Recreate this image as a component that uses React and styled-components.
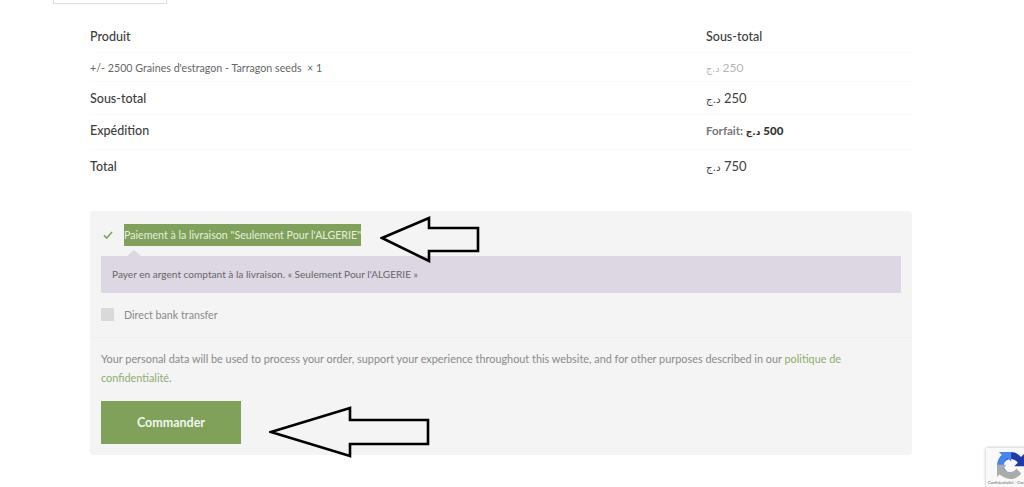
import React from 'react'
import styled, { createGlobalStyle } from 'styled-components'

const rows = [
  { label: 'Sous-total', amount: '250', height: 33, lift: 0 },
  { label: 'Expédition', amount: '500', height: 35, lift: 4, flat: true },
  { label: 'Total', amount: '750', height: 34, lift: 2, last: true }
]

function Price (props) {
  return (
    <Amount tone={props.tone}>
      <Currency>د.ج</Currency> {props.value}
    </Amount>
  )
}

function Arrow (props) {
  return (
    <ArrowSvg width={props.width} height={props.height} left={props.left} top={props.top} viewBox={`0 0 ${props.width} ${props.height}`}>
      <polygon points={props.points} fill='none' stroke='#000' strokeWidth='2.6' strokeLinejoin='miter' />
    </ArrowSvg>
  )
}

function App () {
  return (
    <Page>
      <GlobalStyle />
      <Stub />
      <Summary>
        <Row height={33}>
          <Heading>Produit</Heading>
          <Heading>Sous-total</Heading>
        </Row>
        <Row height={29}>
          <ProductName>+/- 2500 Graines d'estragon - Tarragon seeds &nbsp;× 1</ProductName>
          <Price value='250' tone='light' />
        </Row>
        {rows.map(row => (
          <Row key={row.label} height={row.height} lift={row.lift} last={row.last}>
            <Heading>{row.label}</Heading>
            {row.flat
              ? <Flat><FlatLabel>Forfait:</FlatLabel> <Currency>د.ج</Currency> 500</Flat>
              : <Price value={row.amount} />}
          </Row>
        ))}
      </Summary>
      <Payment>
        <Method>
          <CheckMark width='10' height='10' viewBox='0 0 10 10'>
            <path d='M1 5.5 L3.8 8 L9 2' fill='none' stroke='#8aa86a' strokeWidth='1.8' />
          </CheckMark>
          <Selected>Paiement à la livraison "Seulement Pour l'ALGERIE"</Selected>
        </Method>
        <Notice>Payer en argent comptant à la livraison. « Seulement Pour l'ALGERIE »</Notice>
        <Bank>
          <Square />
          <BankLabel>Direct bank transfer</BankLabel>
        </Bank>
        <Terms>
          Your personal data will be used to process your order, support your experience throughout this website, and for other purposes described in our <TermsLink>politique de confidentialité</TermsLink>.
        </Terms>
        <OrderButton>Commander</OrderButton>
      </Payment>
      <Arrow left={380} top={216} width={101} height={47} points='2,22 49,2 49,12 98,12 98,35 49,35 49,45' />
      <Arrow left={269} top={406} width={162} height={52} points='2,26 81,2 81,14 159,14 159,38 81,38 81,50' />
      <Recaptcha>
        <svg width='27' height='27' viewBox='0 0 64 64'>
          <path d='M64 31.955l-.033-1.37V4.687l-7.16 7.16C50.948 4.674 42.033.093 32.05.093c-10.4 0-19.622 4.96-25.458 12.64l11.736 11.86a15.55 15.55 0 0 1 4.754-5.334c2.05-1.6 4.952-2.906 9.968-2.906.606 0 1.074.07 1.417.2 6.216.49 11.604 3.92 14.774 8.9l-8.308 8.308c10.523-.04 22.4-.066 24.055 0' fill='#1c3aa9' />
          <path d='M31.862.094l-1.37.033H4.594l7.16 7.16C4.58 13.147 0 22.06 0 32.046c0 10.4 4.96 19.622 12.64 25.458L24.5 45.768a15.55 15.55 0 0 1-5.334-4.754c-1.6-2.05-2.906-4.952-2.906-9.968 0-.606.07-1.074.2-1.417.49-6.216 3.92-11.604 8.9-14.774l8.308 8.308c-.04-10.523-.066-22.4 0-24.055' fill='#4285f4' />
          <path d='M.001 31.955l.033 1.37v25.9l7.16-7.16c5.86 7.173 14.774 11.754 24.76 11.754 10.394 0 19.62-4.96 25.456-12.64l-11.736-11.86a15.55 15.55 0 0 1-4.754 5.334c-2.05 1.6-4.952 2.906-9.968 2.906-.606 0-1.074-.07-1.417-.2-6.216-.49-11.604-3.92-14.774-8.9l8.308-8.308c-10.523.04-22.4.066-24.055 0' fill='#ababab' />
        </svg>
        <RecaptchaText>Confidentialité - Conditions</RecaptchaText>
      </Recaptcha>
    </Page>
  )
}

const GlobalStyle = createGlobalStyle`
  html, body {
    margin: 0;
    height: 100%;
    overflow: hidden;
    background: #fff;
  }
  body {
    font-family: 'Lato', 'Noto Sans', sans-serif;
  }
`

const Page = styled.div`
  position: relative;
  width: 1024px;
  height: 487px;
  overflow: hidden;
  padding: 0 112px 0 90px;
  box-sizing: border-box;
`

const Stub = styled.div`
  width: 114px;
  height: 5px;
  margin: -1px 0 0 -37px;
  border: 1px solid #dcdcdc;
  box-sizing: border-box;
`

const Summary = styled.div`
  margin-top: 16px;
  display: flex;
  flex-direction: column;
`

const Row = styled.div`
  display: grid;
  grid-template-columns: 616px 1fr;
  align-items: center;
  height: ${props => props.height}px;
  padding-bottom: ${props => props.lift || 0}px;
  box-sizing: border-box;
  border-bottom: ${props => props.last ? 'none' : '1px solid #fafafa'};
`

const Heading = styled.div`
  font-size: 12.5px;
  font-weight: 500;
  color: #3d3d3d;
`

const ProductName = styled.div`
  font-size: 10.7px;
  color: #666;
`

const Amount = styled.div`
  color: ${props => props.tone === 'light' ? '#b5b5b5' : '#3d3d3d'};
  font-size: ${props => props.tone === 'light' ? '12px' : '13px'};
`

const Currency = styled.span`
  unicode-bidi: isolate;
  direction: rtl;
  font-family: 'DejaVu Sans', sans-serif;
  font-size: 0.8em;
`

const Flat = styled.div`
  font-size: 11.5px;
  font-weight: 900;
  color: #333;
`

const FlatLabel = styled.span`
  color: #777;
  font-weight: 700;
`

const Payment = styled.div`
  margin-top: 27px;
  height: 244px;
  background: #f4f4f4;
  border-radius: 4px;
  padding: 13px 11px 0;
  box-sizing: border-box;
`

const Method = styled.div`
  display: flex;
  align-items: center;
  height: 22px;
  padding-left: 2px;
  gap: 11px;
`

const CheckMark = styled.svg`
  flex: none;
`

const Selected = styled.span`
  background: #7fa15a;
  color: #e6eedd;
  font-size: 10.65px;
  line-height: 22px;
  white-space: nowrap;
`

const Notice = styled.div`
  position: relative;
  margin-top: 10px;
  height: 37px;
  padding-left: 11px;
  background: #ddd6e3;
  color: #666;
  font-size: 10.1px;
  line-height: 37px;
  &::before {
    content: '';
    position: absolute;
    left: 26px;
    top: -6px;
    border-left: 7px solid transparent;
    border-right: 7px solid transparent;
    border-bottom: 6px solid #ddd6e3;
  }
`

const Bank = styled.div`
  display: flex;
  align-items: center;
  gap: 10px;
  height: 45px;
  margin: 0 -11px;
  padding: 0 11px 1px;
  box-sizing: border-box;
  border-bottom: 1px solid #efefef;
`

const Square = styled.span`
  width: 13px;
  height: 13px;
  background: #d9d9d9;
`

const BankLabel = styled.span`
  font-size: 10.7px;
  color: #8a8a8a;
`

const Terms = styled.p`
  margin: 11px 0 0;
  font-size: 10.87px;
  line-height: 19px;
  color: #8a8a8a;
`

const TermsLink = styled.a`
  color: #8fac70;
`

const OrderButton = styled.button`
  display: block;
  width: 140px;
  height: 43px;
  margin-top: 14px;
  border: none;
  background: #7fa15a;
  color: #f3f6ef;
  font-family: inherit;
  font-size: 12.5px;
  font-weight: 700;
`

const ArrowSvg = styled.svg`
  position: absolute;
  left: ${props => props.left}px;
  top: ${props => props.top}px;
`

const Recaptcha = styled.div`
  position: absolute;
  left: 986px;
  top: 448px;
  width: 60px;
  height: 39px;
  background: #f9f9f9;
  box-shadow: 0 0 3px rgba(0, 0, 0, 0.3);
  padding: 4px 0 0 11px;
  box-sizing: border-box;
`

const RecaptchaText = styled.div`
  position: absolute;
  left: 2px;
  top: 32px;
  font-size: 4px;
  color: #666;
  white-space: nowrap;
`

export default App
